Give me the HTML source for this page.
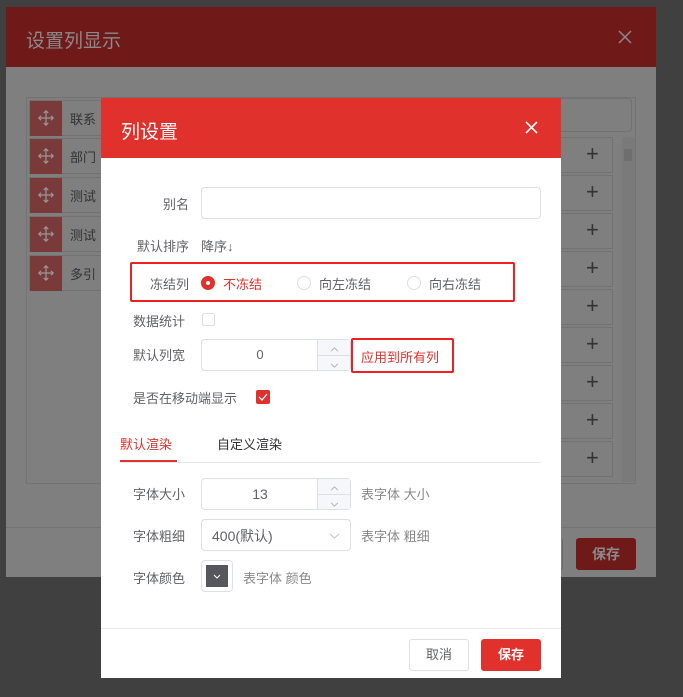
<!DOCTYPE html>
<html><head><meta charset="utf-8"><style>
*{box-sizing:border-box;margin:0;padding:0}
body{width:683px;height:697px;background:#404040;position:relative;overflow:hidden;font-family:"Liberation Sans","Noto Sans CJK SC",sans-serif;font-size:13px;color:#606266}
.a{position:absolute}
.outer{left:6px;top:7px;width:650px;height:570px;background:#7f7f7f}
.oh{left:0;top:0;width:650px;height:60px;background:#701919;color:#8a8a8a;font-size:19px;padding:19px 0 0 20px}
.row{border:1px solid #727272;background:#7f7f7f}
.ic{background:#7a3a3a;width:32px;height:35px;position:relative}
.plus{color:#333;font-size:22px;line-height:30px}
.d{left:101px;top:98px;width:460px;height:580px;background:#fff}
.dh{left:0;top:0;width:460px;height:60px;background:#e0312d;color:#fff;font-size:19px;padding:19px 0 0 20px}
.lab{color:#606266;font-size:13px;text-align:right;width:88px}
.inp{border:1px solid #dcdfe6;border-radius:4px;background:#fff}
.red{color:#e0312d}
.radio{width:14px;height:14px;border:1px solid #dcdfe6;border-radius:50%}
.sp{position:absolute;left:115px;top:0;width:33px;height:30px;background:#f5f7fa;border-left:1px solid #dcdfe6}
.sp div{height:15px}
.sp div+div{border-top:1px solid #dcdfe6}
</style></head><body>
<svg width="0" height="0" style="position:absolute"><defs>
<symbol id="mv" viewBox="0 0 20 20"><path d="M10 2v16M2 10h16M7.5 4.5L10 2l2.5 2.5M7.5 15.5L10 18l2.5-2.5M4.5 7.5L2 10l2.5 2.5M15.5 7.5L18 10l-2.5 2.5" fill="none" stroke="#999" stroke-width="1.3"/></symbol>
<symbol id="up" viewBox="0 0 10 6"><path d="M1 5l4-4 4 4" fill="none" stroke="#a8abb2" stroke-width="1"/></symbol>
<symbol id="dn" viewBox="0 0 10 6"><path d="M1 1l4 4 4-4" fill="none" stroke="#a8abb2" stroke-width="1"/></symbol>
</defs></svg>
<div class="a outer">
 <div class="a oh">设置列显示<svg class="a" style="right:24px;top:23px" width="14" height="14"><path d="M1 1l12 12M13 1L1 13" stroke="#8a8a8a" stroke-width="1.5"/></svg></div>
 <div class="a" style="left:20px;top:90px;width:610px;height:387px;border:1px solid #737373"></div>
 <div class="a row" style="left:430px;top:91px;width:196px;height:34px;border-radius:4px"></div>
</div>
<div class="a row" style="left:29px;top:100px;width:80px;height:36px"><div class="ic"><svg class="a" style="left:7px;top:8px" width="18" height="18"><use href="#mv"/></svg></div></div>
<div class="a row" style="left:29px;top:138px;width:80px;height:36px"><div class="ic"><svg class="a" style="left:7px;top:8px" width="18" height="18"><use href="#mv"/></svg></div></div>
<div class="a row" style="left:29px;top:177px;width:80px;height:36px"><div class="ic"><svg class="a" style="left:7px;top:8px" width="18" height="18"><use href="#mv"/></svg></div></div>
<div class="a row" style="left:29px;top:216px;width:80px;height:36px"><div class="ic"><svg class="a" style="left:7px;top:8px" width="18" height="18"><use href="#mv"/></svg></div></div>
<div class="a row" style="left:29px;top:255px;width:80px;height:36px"><div class="ic"><svg class="a" style="left:7px;top:8px" width="18" height="18"><use href="#mv"/></svg></div></div>
<div class="a" style="left:70px;top:109px;color:#333">联系</div>
<div class="a" style="left:70px;top:147px;color:#333">部门</div>
<div class="a" style="left:70px;top:186px;color:#333">测试</div>
<div class="a" style="left:70px;top:225px;color:#333">测试</div>
<div class="a" style="left:70px;top:264px;color:#333">多引</div>
<div class="a" style="left:560px;top:137px">
 <div class="a row" style="left:0;top:0;width:53px;height:36px"></div><div class="a plus" style="left:26px;top:2px">+</div>
 <div class="a row" style="left:0;top:38px;width:53px;height:36px"></div><div class="a plus" style="left:26px;top:40px">+</div>
 <div class="a row" style="left:0;top:76px;width:53px;height:36px"></div><div class="a plus" style="left:26px;top:78px">+</div>
 <div class="a row" style="left:0;top:114px;width:53px;height:36px"></div><div class="a plus" style="left:26px;top:116px">+</div>
 <div class="a row" style="left:0;top:152px;width:53px;height:36px"></div><div class="a plus" style="left:26px;top:154px">+</div>
 <div class="a row" style="left:0;top:190px;width:53px;height:36px"></div><div class="a plus" style="left:26px;top:192px">+</div>
 <div class="a row" style="left:0;top:228px;width:53px;height:36px"></div><div class="a plus" style="left:26px;top:230px">+</div>
 <div class="a row" style="left:0;top:266px;width:53px;height:36px"></div><div class="a plus" style="left:26px;top:268px">+</div>
 <div class="a row" style="left:0;top:304px;width:53px;height:36px"></div><div class="a plus" style="left:26px;top:306px">+</div>
</div>
<div class="a" style="left:622px;top:137px;width:13px;height:345px;background:#7a7a7a"><div class="a" style="left:2px;top:12px;width:8px;height:12px;background:#6e6e6e"></div></div>
<div class="a" style="left:6px;top:527px;width:650px;height:1px;background:#737373"></div>
<div class="a" style="left:540px;top:538px;width:23px;height:32px;border:1px solid #6a6a6a;border-radius:3px"></div>
<div class="a" style="left:576px;top:538px;width:60px;height:32px;background:#701919;border-radius:3px;color:#8a8a8a;text-align:center;line-height:32px;font-size:14px;font-weight:bold">保存</div>

<div class="a d">
 <div class="a dh">列设置<svg class="a" style="right:23px;top:23px" width="13" height="13"><path d="M1 1l11 11M12 1L1 12" stroke="#fff" stroke-width="1.6"/></svg></div>
 <div class="a lab" style="left:0;top:96px">别名</div>
 <div class="a inp" style="left:100px;top:89px;width:340px;height:32px"></div>
 <div class="a lab" style="left:0;top:138px">默认排序</div>
 <div class="a" style="left:100px;top:138px">降序↓</div>
 <div class="a" style="left:29px;top:164px;width:385px;height:40px;border:2px solid #f02020;border-radius:2px"></div>
 <div class="a lab" style="left:0;top:176px">冻结列</div>
 <div class="a radio" style="left:100px;top:178px;background:#e0312d;border-color:#e0312d"><div class="a" style="left:4px;top:4px;width:4px;height:4px;background:#fff;border-radius:50%"></div></div>
 <div class="a red" style="left:122px;top:176px">不冻结</div>
 <div class="a radio" style="left:196px;top:178px"></div>
 <div class="a" style="left:218px;top:176px">向左冻结</div>
 <div class="a radio" style="left:306px;top:178px"></div>
 <div class="a" style="left:328px;top:176px">向右冻结</div>
 <div class="a" style="left:32px;top:213px">数据统计</div>
 <div class="a" style="left:101px;top:215px;width:13px;height:13px;border:1px solid #dcdfe6;border-radius:2px"></div>
 <div class="a" style="left:32px;top:247px">默认列宽</div>
 <div class="a inp" style="left:100px;top:241px;width:150px;height:32px"><div class="a" style="left:0;width:116px;text-align:center;top:7px">0</div><div class="sp"><div><svg style="margin:5px 0 0 12px" width="9" height="5"><use href="#up"/></svg></div><div><svg style="margin:4px 0 0 12px" width="9" height="5"><use href="#dn"/></svg></div></div></div>
 <div class="a" style="left:250px;top:240px;width:103px;height:35px;border:2px solid #f02020;border-radius:2px;color:#e0312d;padding:7px 0 0 8px">应用到所有列</div>
 <div class="a" style="left:32px;top:290px">是否在移动端显示</div>
 <div class="a" style="left:155px;top:292px;width:14px;height:14px;background:#e0312d;border-radius:2px"><svg class="a" style="left:2px;top:3px" width="10" height="8"><path d="M1 4l3 3 5-6" fill="none" stroke="#fff" stroke-width="1.3"/></svg></div>
 <div class="a red" style="left:19px;top:336px">默认渲染</div>
 <div class="a" style="left:19px;top:362px;width:57px;height:2px;background:#e0312d"></div>
 <div class="a" style="left:19px;top:364px;width:421px;height:1px;background:#e4e7ed"></div>
 <div class="a" style="left:116px;top:336px;color:#303133">自定义渲染</div>
 <div class="a" style="left:32px;top:386px">字体大小</div>
 <div class="a inp" style="left:100px;top:380px;width:150px;height:32px"><div class="a" style="left:0;width:116px;text-align:center;top:7px;font-size:14px">13</div><div class="sp"><div><svg style="margin:5px 0 0 12px" width="9" height="5"><use href="#up"/></svg></div><div><svg style="margin:4px 0 0 12px" width="9" height="5"><use href="#dn"/></svg></div></div></div>
 <div class="a" style="left:260px;top:386px;color:#888">表字体 大小</div>
 <div class="a" style="left:32px;top:428px">字体粗细</div>
 <div class="a inp" style="left:100px;top:421px;width:150px;height:32px;padding:6px 0 0 10px;font-size:14px">400(默认)<svg class="a" style="right:10px;top:13px" width="11" height="6"><path d="M1 1l4.5 4 4.5-4" fill="none" stroke="#c0c4cc"/></svg></div>
 <div class="a" style="left:260px;top:428px;color:#888">表字体 粗细</div>
 <div class="a" style="left:32px;top:470px">字体颜色</div>
 <div class="a" style="left:100px;top:462px;width:32px;height:32px;border:1px solid #dcdfe6;border-radius:4px;padding:4px"><div style="width:22px;height:22px;background:#55575c;position:relative"><svg class="a" style="left:7px;top:9px" width="8" height="5"><path d="M1 1l3 3 3-3" fill="none" stroke="#fff"/></svg></div></div>
 <div class="a" style="left:142px;top:470px;color:#888">表字体 颜色</div>
 <div class="a" style="left:0;top:530px;width:460px;height:1px;background:#e4e7ed"></div>
 <div class="a" style="left:308px;top:541px;width:60px;height:32px;border:1px solid #dcdfe6;border-radius:3px;text-align:center;line-height:30px;color:#606266">取消</div>
 <div class="a" style="left:380px;top:541px;width:60px;height:32px;background:#e0312d;border-radius:3px;text-align:center;line-height:32px;color:#fff;font-weight:bold">保存</div>
</div>
</body></html>
